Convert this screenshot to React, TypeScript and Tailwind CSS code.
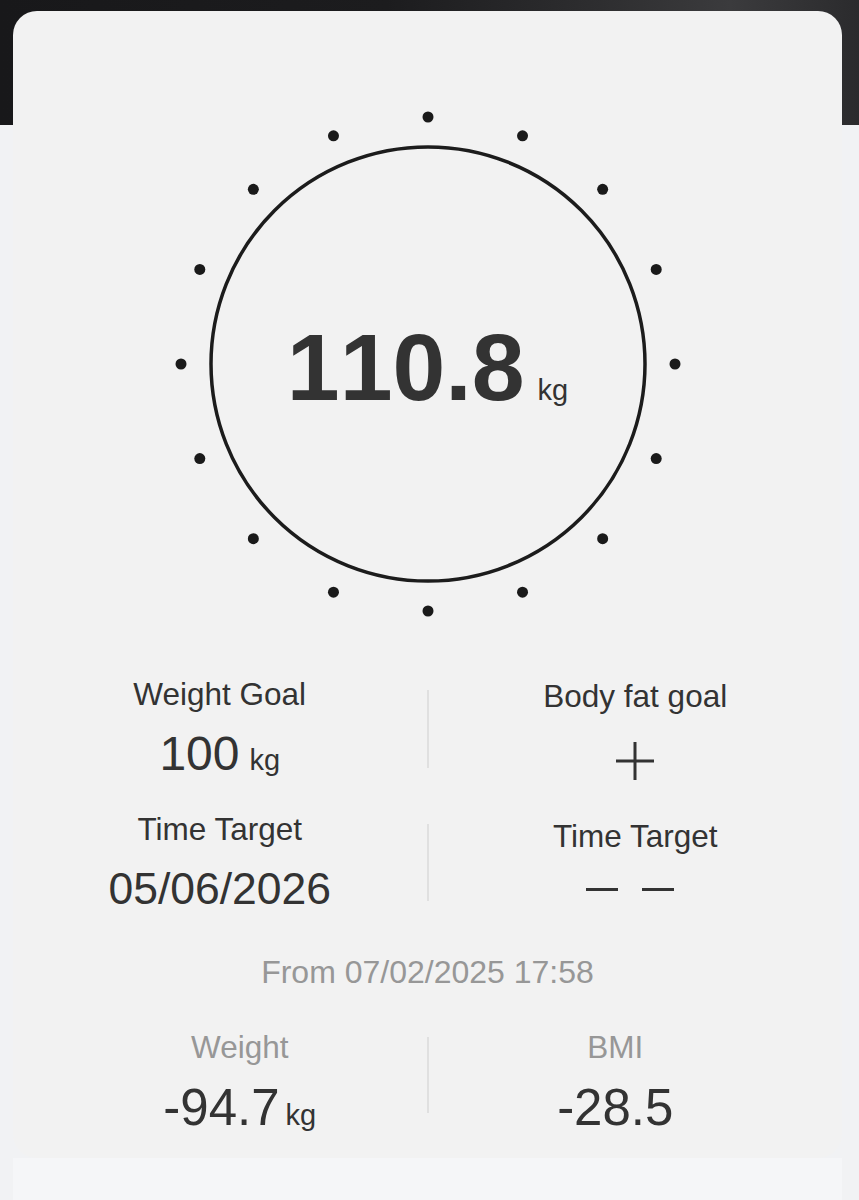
import React from "react";

const DOTS = Array.from({ length: 16 }, (_, i) => {
  const a = (i * Math.PI) / 8;
  return { x: 260 + 247 * Math.sin(a), y: 260 - 247 * Math.cos(a) };
});

function Dial() {
  return (
    <div className="relative mx-auto h-[520px] w-[520px]">
      <svg width="520" height="520" viewBox="0 0 520 520">
        <circle cx="260" cy="260" r="217" fill="none" stroke="#1c1c1c" strokeWidth="3.5" />
        {DOTS.map((d, i) => (
          <circle key={i} cx={d.x} cy={d.y} r="5.5" fill="#1a1a1a" />
        ))}
      </svg>
      <div className="absolute inset-0 flex items-center justify-center pt-[6px]">
        <div className="flex items-baseline text-[#333333]">
          <span className="text-[95px] font-bold leading-none [font-kerning:none]">110.8</span>
          <span className="ml-[13px] text-[29px] leading-none">kg</span>
        </div>
      </div>
    </div>
  );
}

function Divider({ className }: { className: string }) {
  return <div className={`w-[2px] bg-[#e0e0e0] ${className}`} />;
}

function PlusIcon() {
  return (
    <svg width="40" height="40" viewBox="0 0 40 40" className="mt-[27px]">
      <path d="M20 1v38M1 20h38" stroke="#333333" strokeWidth="3" />
    </svg>
  );
}

export default function App() {
  return (
    <div className="relative h-[1200px] w-[859px] overflow-hidden bg-[#f1f2f4] font-['Liberation_Sans',Arial,sans-serif]">
      {/* dark header behind the card */}
      <div className="absolute inset-x-0 top-0 h-[125px] bg-[linear-gradient(90deg,#18181a_0%,#1c1c1e_45%,#2e2e30_70%,#3b3b3d_85%,#2b2b2d_100%)]" />

      <div className="relative ml-[13px] mr-[17px] flex h-full flex-col pt-[11px]">
        <div className="rounded-[24px] bg-[#f2f2f2] pb-[25px] pt-[93px]">
          <Dial />

          {/* goals */}
          <div className="mt-[52px] flex items-start">
            <div className="flex flex-1 flex-col items-center text-[#333333]">
              <div className="text-[31.5px] leading-[36px]">Weight Goal</div>
              <div className="mt-[18px] flex items-baseline">
                <span className="text-[48px] leading-none">100</span>
                <span className="ml-[10px] text-[29px] leading-none">kg</span>
              </div>
            </div>
            <Divider className="mt-[14px] h-[78px]" />
            <div className="flex flex-1 flex-col items-center pt-[2px] text-[#333333]">
              <div className="text-[31.5px] leading-[36px]">Body fat goal</div>
              <PlusIcon />
            </div>
          </div>

          <div className="mt-[30px] flex items-start">
            <div className="flex flex-1 flex-col items-center text-[#333333]">
              <div className="text-[31.5px] leading-[36px]">Time Target</div>
              <div className="mt-[20px] text-[44.5px] leading-none">05/06/2026</div>
            </div>
            <Divider className="mt-[13px] h-[77px]" />
            <div className="flex flex-1 flex-col items-center pt-[7px] text-[#333333]">
              <div className="text-[31.5px] leading-[36px]">Time Target</div>
              <div className="mt-[13px] flex h-[44px] items-center gap-[24px] pr-[10px]">
                <div className="h-[3px] w-[32px] bg-[#333333]" />
                <div className="h-[3px] w-[32px] bg-[#333333]" />
              </div>
            </div>
          </div>

          <div className="mt-[42px] text-center text-[32px] leading-[36px] text-[#979797]">
            From 07/02/2025 17:58
          </div>

          {/* change since */}
          <div className="mt-[39px] flex items-start px-[40px]">
            <div className="flex flex-1 flex-col items-center">
              <div className="text-[31.5px] leading-[36px] text-[#979797]">Weight</div>
              <div className="mt-[17px] flex items-baseline text-[#333333]">
                <span className="text-[51px] leading-none">-94.7</span>
                <span className="ml-[6px] text-[29px] leading-none">kg</span>
              </div>
            </div>
            <Divider className="mt-[8px] h-[76px]" />
            <div className="flex flex-1 flex-col items-center">
              <div className="text-[31.5px] leading-[36px] text-[#979797]">BMI</div>
              <div className="mt-[17px] text-[51px] leading-none text-[#333333]">-28.5</div>
            </div>
          </div>
        </div>
        <div className="flex-1 bg-[#f5f6f8]" />
      </div>
    </div>
  );
}
